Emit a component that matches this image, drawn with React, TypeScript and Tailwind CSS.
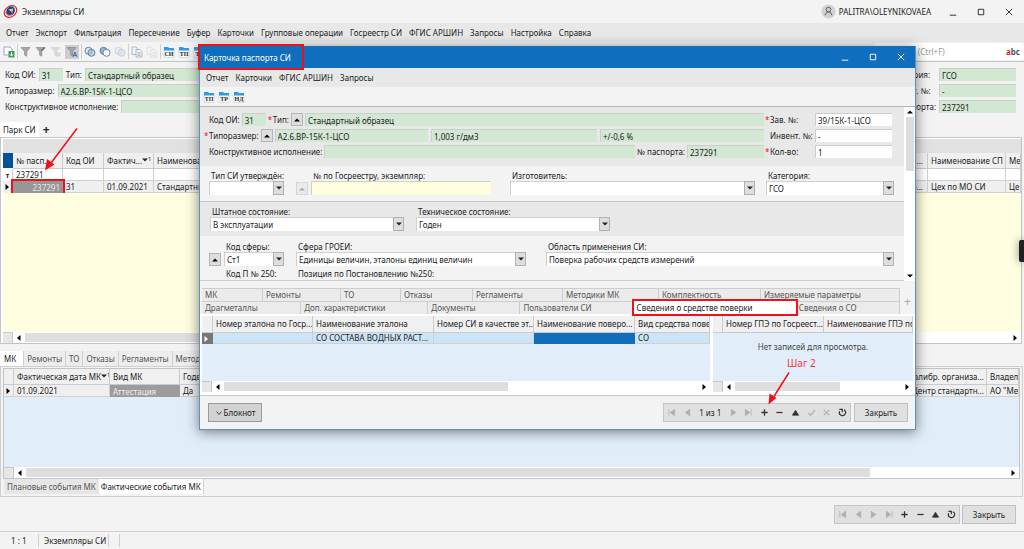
import React, { useState } from 'react';

const mainMenu = [
  'Отчет', 'Экспорт', 'Фильтрация', 'Пересечение', 'Буфер', 'Карточки',
  'Групповые операции', 'Госреестр СИ', 'ФГИС АРШИН', 'Запросы', 'Настройка', 'Справка',
];
const cardMenu = ['Отчет', 'Карточки', 'ФГИС АРШИН', 'Запросы'];
const eventTabs = ['МК', 'Ремонты', 'ТО', 'Отказы', 'Регламенты', 'Методики МК'];

const cardTabsTop = [
  { name: 'МК', size: 54 },
  { name: 'Ремонты', size: 71 },
  { name: 'ТО', size: 53 },
  { name: 'Отказы', size: 65 },
  { name: 'Регламенты', size: 83 },
  { name: 'Методики МК', size: 89 },
  { name: 'Комплектность', size: 95 },
  { name: 'Измеряемые параметры', size: 132 },
];
const cardTabsBottom = [
  { name: 'Драгметаллы', size: 92 },
  { name: 'Доп. характеристики', size: 120 },
  { name: 'Документы', size: 85 },
  { name: 'Пользователи СИ', size: 106 },
  { name: 'Сведения о средстве поверки', size: 156 },
  { name: 'Сведения о СО', size: 97 },
];

/* ---------- icons ---------- */

const glyphs: Record<string, React.ReactNode> = {
  first: <path d="M2 1.5v7M8.5 1.5v7L3.5 5z" />,
  prev: <path d="M7.5 1.5v7L2.5 5z" />,
  next: <path d="M2.5 1.5v7l5-3.5z" />,
  last: <path d="M8 1.5v7M1.5 1.5v7l5-3.5z" />,
  add: <path d="M5 1.5v7M1.5 5h7" strokeWidth="1.4" />,
  remove: <path d="M1.5 5h7" strokeWidth="1.4" />,
  edit: <path d="M5 2.5L8.5 8h-7z" />,
  post: <path d="M1.5 5.5L4 8l5-6" fill="none" strokeWidth="1.4" />,
  cancel: <path d="M2 2l6 6M8 2L2 8" strokeWidth="1.2" />,
  refresh: <path d="M6.5 2a3.4 3.4 0 1 1-4.6 1.5M1.5 1.5h3.3v3.3" fill="none" strokeWidth="1.3" />,
};

const glyphNames: Record<string, string> = {
  first: 'Первая', prev: 'Предыдущая', next: 'Следующая', last: 'Последняя', add: 'Добавить',
  remove: 'Удалить', edit: 'Изменить', post: 'Сохранить', cancel: 'Отменить', refresh: 'Обновить',
};

function Glyph({ name }: { name: string }) {
  return (
    <svg viewBox="0 0 10 10" className="h-[9px] w-[9px]" fill="currentColor" stroke="currentColor" strokeWidth="0.8">
      {glyphs[name]}
    </svg>
  );
}

function Triangle({ dir }: { dir: 'up' | 'down' | 'left' | 'right' }) {
  const paths = {
    up: 'M1 5.5h6L4 2.5z',
    down: 'M1 2.5h6l-3 3z',
    left: 'M5.5 1v6L2 4z',
    right: 'M2.5 1v6L6 4z',
  };
  return (
    <svg viewBox="0 0 8 8" className="h-2 w-2 shrink-0" fill="currentColor">
      <path d={paths[dir]} />
    </svg>
  );
}

function FolderIcon({ label }: { label: string }) {
  return (
    <svg viewBox="0 0 12 12" className="h-3 w-3">
      <path d="M1 3h10v8.5H1z" fill="#f7f9fb" stroke="#b9c6d2" strokeWidth="0.5" />
      <path d="M1 1h4l1 1h5v2.5H1z" fill="#2f9be6" />
      <text x="6" y="10.3" fontSize="6" fontWeight="700" textAnchor="middle" fill="#222" fontFamily="Liberation Serif, serif">
        {label}
      </text>
    </svg>
  );
}

function FilterIcon({ kind }: { kind: 'plain' | 'edit' | 'clear' | 'auto' }) {
  return (
    <svg viewBox="0 0 12 12" className={`h-3 w-3 ${kind === 'clear' ? 'opacity-30' : ''}`}>
      <path d="M1 1.5h9L6.7 5.5v4.8L4.6 9V5.5z" fill="#a2a7ab" stroke="#7d8286" strokeWidth="0.6" />
      {kind === 'edit' && <path d="M6 5l4-3.5" stroke="#6d7175" strokeWidth="1.4" />}
      {kind === 'clear' && <path d="M6.5 6.5l4 4M10.5 6.5l-4 4" stroke="#888" strokeWidth="1.2" />}
      {kind === 'auto' && <path d="M7 11l2-5 2 5M7.7 9.4h2.6" fill="none" stroke="#2c66b0" strokeWidth="0.9" />}
    </svg>
  );
}

function SetIcon({ kind }: { kind: 'and' | 'or' | 'off' }) {
  return (
    <svg viewBox="0 0 12 12" className={`h-3 w-3 ${kind === 'off' ? 'opacity-30' : ''}`} strokeWidth="0.9">
      <circle cx="4.5" cy="4.8" r="3.5" fill={kind === 'or' ? '#8fb6dc' : '#dbe7f3'} stroke="#5a7794" />
      <circle cx="7.5" cy="6.8" r="3.5" fill={kind === 'or' ? '#fff' : '#9cc0e2'} fillOpacity={kind === 'or' ? 1 : 0.6} stroke="#5a7794" />
    </svg>
  );
}

function CopyIcon({ faded }: { faded?: boolean }) {
  return (
    <svg viewBox="0 0 12 12" className={`h-3 w-3 ${faded ? 'opacity-30' : ''}`} fill="#eef3f8" stroke="#8fa3b5" strokeWidth="0.7">
      <path d="M1 1h4l1.5 1.5V8.5H1z" />
      <path d="M5 3.5h4l2 2V11H5z" />
      <path d="M6.5 6.5h3M6.5 8h3M6.5 9.5h3" />
    </svg>
  );
}

function ExportIcon() {
  return (
    <svg viewBox="0 0 12 12" className="h-3 w-3">
      <path d="M1 1h6l2 2v6H1z" fill="#fff" stroke="#7c97b0" strokeWidth="0.8" />
      <path d="M5.5 5h6v6.5h-6z" fill="#3a9a52" />
      <path d="M8.5 6.2v3.5M6.9 8.3l1.6 1.8 1.6-1.8" fill="none" stroke="#fff" strokeWidth="1" />
    </svg>
  );
}

function Logo() {
  return (
    <svg viewBox="0 0 16 16" className="h-[15px] w-[15px]" fill="none">
      <ellipse cx="8" cy="8" rx="7.3" ry="5.6" transform="rotate(-38 8 8)" stroke="#e3262b" strokeWidth="1.3" />
      <ellipse cx="8.5" cy="7.5" rx="5" ry="4.2" transform="rotate(-38 8 8)" fill="#17449b" />
      <path d="M5.5 5.8l5.5-1-1.3 5.2L8.8 8z" fill="#f7d52c" />
      <path d="M3 9c1 4 6 4 9 .5" stroke="#e3262b" strokeWidth="1" />
    </svg>
  );
}

/* ---------- small controls ---------- */

function WindowButtons() {
  return (
    <div className="flex gap-[18px]">
      {[
        ['Свернуть', 'M2 9h7'],
        ['Развернуть', 'M2.5 2.5h6v6h-6z'],
        ['Закрыть окно', 'M2 2l7 7M9 2l-7 7'],
      ].map(([title, d]) => (
        <button key={title} aria-label={title} className="w-[10px]">
          <svg viewBox="0 0 11 11" className="h-[10px] w-[10px]" fill="none" stroke="currentColor">
            <path d={d} />
          </svg>
        </button>
      ))}
    </div>
  );
}

function Field({ id, value, className }: { id: string; value: string; className: string }) {
  return (
    <input
      id={id}
      aria-label={id}
      readOnly
      defaultValue={value}
      className={`h-[13px] min-w-0 border-l border-t border-[#c9cfc9] px-[2px] outline-none ${className}`}
    />
  );
}

function UpButton({ label, disabled }: { label: string; disabled?: boolean }) {
  return (
    <button
      aria-label={label}
      disabled={disabled}
      className="flex h-[13px] w-3 shrink-0 items-center justify-center border border-[#b5b5b5] bg-[#dedede] text-black disabled:border-[#d6d6d6] disabled:bg-[#eaeaea] disabled:text-[#aaa]"
    >
      <Triangle dir="up" />
    </button>
  );
}

function Combo({ label, value, className }: { label: string; value: string; className: string }) {
  return (
    <label className={`flex flex-col ${className}`}>
      <span className="h-[10px] whitespace-nowrap pl-[2px] leading-[10px]">{label}</span>
      <span className="relative block">
        <select className="block h-[14px] w-full appearance-none border-l border-t border-[#cfcfcf] bg-white px-[2px] leading-[12px] outline-none">
          <option>{value}</option>
        </select>
        <span className="pointer-events-none absolute inset-y-0 right-0 flex w-[11px] items-center justify-center border border-[#b0b0b0] bg-[#dedede]">
          <Triangle dir="down" />
        </span>
      </span>
    </label>
  );
}

function ScrollBar({ thumb }: { thumb: number }) {
  return (
    <div className="flex h-[11px] bg-white">
      <div className="w-[10px] border-r border-t border-[#c8c8c8] bg-[#e6e6e6]" />
      <div className="flex flex-1 items-center gap-[2px] px-[2px] text-black">
        <Triangle dir="left" />
        <div className="h-[9px] flex-1">
          <div className="h-full bg-[#dedede]" style={{ width: `${thumb}%` }} />
        </div>
        <Triangle dir="right" />
      </div>
    </div>
  );
}

function Navigator({ items, className }: { items: string[]; className: string }) {
  return (
    <div className={`flex h-[19px] items-center border border-[#c6c6c6] bg-[#e0e0e0] ${className}`}>
      {items.map((item) =>
        glyphs[item] ? (
          <button
            key={item}
            aria-label={glyphNames[item]}
            className={`flex flex-1 justify-center ${
              ['add', 'remove', 'edit', 'refresh'].includes(item) ? 'text-[#333]' : 'text-[#aeaeae]'
            }`}
          >
            <Glyph name={item} />
          </button>
        ) : (
          <span key={item} className="whitespace-nowrap px-1">{item}</span>
        )
      )}
    </div>
  );
}

function CloseButton() {
  return <button className="h-[19px] w-[54px] border border-[#c0c0c0] bg-[#e0e0e0]">Закрыть</button>;
}

function SortMark() {
  return (
    <span className="inline-flex items-start">
      <svg viewBox="0 0 6 8" className="h-2 w-[6px]" fill="currentColor">
        <path d="M0 2.500h6l-3 3z" />
      </svg>
      <sup className="top-0 text-[6px] leading-[6px]">1</sup>
    </span>
  );
}

const th = 'overflow-hidden whitespace-nowrap border-b border-r border-[#cbcbcb] bg-[#f0f0f0] pl-[3px] text-left font-normal';
const td = 'overflow-hidden whitespace-nowrap border-b border-r border-[#d0d0d0] pl-[3px]';

/* ---------- main window ---------- */

function PassportTable() {
  return (
    <table className="w-full table-fixed border-separate border-spacing-0 leading-[11px]">
      <colgroup>
        <col className="w-[10px]" />
        <col className="w-[50px]" />
        <col className="w-[41px]" />
        <col className="w-[50px]" />
        <col />
        <col className="w-[78px]" />
        <col className="w-[15px]" />
      </colgroup>
      <thead>
        <tr className="h-4">
          <th className="border-b border-white bg-[#04519b]" aria-label="Выбор" />
          <th className={th}>№ пасп...</th>
          <th className={th}>Код ОИ</th>
          <th className={th}>Фактич...<SortMark /></th>
          <th className={th}><span className="flex justify-between pr-1"><span>Наименование</span><span>...</span></span></th>
          <th className={th}>Наименование СП</th>
          <th className={th}>Ме</th>
        </tr>
      </thead>
      <tbody>
        <tr className="h-3 bg-white">
          <td className="border-r border-[#d0d0d0] text-center text-[7px] font-bold">т</td>
          <td className={td}>237291</td>
          <td className={td} /><td className={td} /><td className={td} /><td className={td} /><td className={td} />
        </tr>
        <tr className="h-3 bg-[#efefef]">
          <td className="border-r border-[#d0d0d0] text-black"><Triangle dir="right" /></td>
          <td className="bg-[#979797] px-[3px] text-right text-[#e8e8e8] outline-2 outline-[#f0101c]">237291</td>
          <td className={td}>31</td>
          <td className={td}>01.09.2021</td>
          <td className={td}><span className="flex justify-between pr-1"><span>Стандартный образец</span><span>о...</span></span></td>
          <td className={td}>Цех по МО СИ</td>
          <td className={td}>Це</td>
        </tr>
      </tbody>
    </table>
  );
}

function EventTable() {
  return (
    <table className="w-full table-fixed border-separate border-spacing-0 leading-[11px]">
      <colgroup>
        <col className="w-[10px]" />
        <col className="w-[96px]" />
        <col className="w-[70px]" />
        <col className="w-[120px]" />
        <col />
        <col className="w-[32px]" />
      </colgroup>
      <thead>
        <tr className="h-4">
          <th className={th} aria-label="Выбор" />
          <th className={th}>Фактическая дата МК<SortMark /></th>
          <th className={th}>Вид МК</th>
          <th className={th}>Годен</th>
          <th className={th}><span className="block pr-[2px] text-right">калибр. организа...</span></th>
          <th className={th}>Владел</th>
        </tr>
      </thead>
      <tbody>
        <tr className="h-3 bg-[#efefef]">
          <td className="border-b border-r border-[#d0d0d0] text-black"><Triangle dir="right" /></td>
          <td className={td}>01.09.2021</td>
          <td className="bg-[#9c9c9c] px-[3px] text-[#f0f0f0]">Аттестация</td>
          <td className={td}>Да</td>
          <td className={td}><span className="block pr-[2px] text-right">"Центр стандартн...</span></td>
          <td className={td}>АО "Ме</td>
        </tr>
      </tbody>
    </table>
  );
}

function MainToolbar() {
  const sep = <span className="-mx-px h-[15px] w-px bg-[#d0d0d0]" />;
  return (
    <div className="flex h-5 items-center border-b border-[#c4c4c4]">
      <div className="flex flex-1 items-center gap-[3px] pl-[3px]">
        <button aria-label="Выгрузить"><ExportIcon /></button>
        {sep}
        <button aria-label="Фильтр"><FilterIcon kind="plain" /></button>
        <button aria-label="Изменить фильтр"><FilterIcon kind="edit" /></button>
        <button aria-label="Снять фильтр"><FilterIcon kind="clear" /></button>
        <button aria-label="Автофильтр" className="bg-[#cdcdcd] p-px"><FilterIcon kind="auto" /></button>
        {sep}
        <button aria-label="Пересечение"><SetIcon kind="and" /></button>
        <button aria-label="Разность"><SetIcon kind="or" /></button>
        <button aria-label="Сброс"><SetIcon kind="off" /></button>
        {sep}
        <button aria-label="Копировать"><CopyIcon /></button>
        <button aria-label="Вставить"><CopyIcon faded /></button>
        {sep}
        <button aria-label="СИ"><FolderIcon label="СИ" /></button>
        <button aria-label="ТП"><FolderIcon label="ТП" /></button>
        <button aria-label="ТР"><FolderIcon label="ТР" /></button>
      </div>
      <div className="flex h-[17px] w-[150px] items-center rounded-sm bg-white pr-1">
        <input
          type="search"
          aria-label="Поиск"
          placeholder="Поиск (Ctrl+F)"
          className="w-0 flex-1 pl-[18px] outline-none placeholder:text-[#999]"
        />
        <span className="font-bold text-[#555]"><span className="text-[#d22]">a</span>bc</span>
      </div>
    </div>
  );
}

function MainInfo() {
  const green = 'bg-[#d2e8d2]';
  return (
    <div className="flex gap-2 py-[6px] pl-[5px] pr-2">
      <div className="flex flex-1 flex-col gap-[3px]">
        <div className="flex items-center gap-[3px]">
          <label htmlFor="Код ОИ">Код ОИ:</label>
          <Field id="Код ОИ" value="31" className={`w-6 ${green}`} />
          <label htmlFor="Тип">Тип:</label>
          <Field id="Тип" value="Стандартный образец" className={`flex-1 ${green}`} />
        </div>
        <div className="flex items-center gap-[3px]">
          <label htmlFor="Типоразмер">Типоразмер:</label>
          <Field id="Типоразмер" value="А2.6.ВР-15К-1-ЦСО" className={`flex-1 ${green}`} />
        </div>
        <div className="flex items-center gap-[3px]">
          <label htmlFor="Исполнение">Конструктивное исполнение:</label>
          <Field id="Исполнение" value="" className={`flex-1 ${green}`} />
        </div>
      </div>
      <div className="grid w-[128px] grid-cols-[48px_1fr] items-center gap-[3px]">
        <label htmlFor="Категория" className="whitespace-nowrap">Категория:</label>
        <Field id="Категория" value="ГСО" className={green} />
        <label htmlFor="Инвент. №" className="whitespace-nowrap">Инвент. №:</label>
        <Field id="Инвент. №" value="-" className={green} />
        <label htmlFor="№ паспорта" className="whitespace-nowrap">№ паспорта:</label>
        <Field id="№ паспорта" value="237291" className={green} />
      </div>
    </div>
  );
}

/* ---------- passport card ---------- */

function Required() {
  return <span className="w-[5px] text-[#e11]">*</span>;
}

function CardForm() {
  const green = 'bg-[#d2e8d2]';
  return (
    <div className="flex border-t border-[#b5b5b5]">
      <div className="min-w-0 flex-1">
        <div className="flex h-[59px] bg-[#e8e8e8] pl-1 pr-3 pt-[6px]">
          <div className="flex flex-1 flex-col gap-[3px]">
            <div className="flex items-center gap-[2px] pl-[5px]">
              <label htmlFor="card-code">Код ОИ:</label>
              <Field id="card-code" value="31" className={`w-6 ${green}`} />
              <span className="flex"><Required /><label htmlFor="card-type">Тип:</label></span>
              <UpButton label="Выбрать тип" />
              <Field id="card-type" value="Стандартный образец" className={`flex-1 ${green}`} />
            </div>
            <div className="flex items-center gap-[2px]">
              <span className="flex"><Required /><label htmlFor="card-size">Типоразмер:</label></span>
              <UpButton label="Выбрать типоразмер" />
              <Field id="card-size" value="А2.6.ВР-15К-1-ЦСО" className={`flex-1 ${green}`} />
              <Field id="Плотность" value="1,003 г/дм3" className={`ml-px w-[166px] ${green}`} />
              <Field id="Погрешность" value="+/-0,6 %" className={`ml-px w-[164px] ${green}`} />
            </div>
            <div className="flex items-center gap-[2px] pl-[5px]">
              <label htmlFor="card-make">Конструктивное исполнение:</label>
              <Field id="card-make" value="" className={`flex-1 ${green}`} />
              <label htmlFor="card-passport">№ паспорта:</label>
              <Field id="card-passport" value="237291" className={`w-[77px] ${green}`} />
            </div>
          </div>
          <div className="grid w-[128px] grid-cols-[50px_1fr] content-start items-center gap-y-[3px] pl-px">
            <span className="flex whitespace-nowrap"><Required /><label htmlFor="card-serial">Зав. №:</label></span>
            <Field id="card-serial" value="39/15К-1-ЦСО" className="bg-white" />
            <label htmlFor="card-inv" className="whitespace-nowrap pl-[5px]">Инвент. №:</label>
            <Field id="card-inv" value="-" className="bg-white" />
            <span className="flex"><Required /><label htmlFor="card-count">Кол-во:</label></span>
            <Field id="card-count" value="1" className="bg-white" />
          </div>
        </div>

        <div className="flex h-9 items-end border-b border-[#c6c6c6] pb-[6px] pl-[9px] pr-[10px]">
          <Combo label="Тип СИ утверждён:" value="" className="w-[75px]" />
          <div className="flex w-[226px] items-end gap-[3px] pl-3">
            <UpButton label="Выбрать в Госреестре" disabled />
            <label className="flex flex-1 flex-col">
              <span className="h-[10px] whitespace-nowrap pl-[2px] leading-[10px]">№ по Госреестру, экземпляр:</span>
              <input readOnly className="h-[14px] w-[180px] border-l border-t border-[#cfcfcf] bg-[#fffedf] outline-none" />
            </label>
          </div>
          <Combo label="Изготовитель:" value="" className="flex-1" />
          <Combo label="Категория:" value="ГСО" className="ml-[11px] w-[128px]" />
        </div>

        <div className="flex h-[34px] items-end gap-3 bg-[#e8e8e8] pb-[5px] pl-[10px]">
          <Combo label="Штатное состояние:" value="В эксплуатации" className="w-[194px]" />
          <Combo label="Техническое состояние:" value="Годен" className="w-[194px]" />
        </div>

        <div className="flex h-[30px] items-end pl-[9px] pr-[10px]">
          <div className="flex w-[87px] items-end gap-[3px]">
            <UpButton label="Выбрать сферу" />
            <Combo label="Код сферы:" value="Ст1" className="w-[60px]" />
          </div>
          <Combo label="Сфера ГРОЕИ:" value="Единицы величин, эталоны единиц величин" className="w-[230px]" />
          <Combo label="Область применения СИ:" value="Поверка рабочих средств измерений" className="ml-5 flex-1" />
        </div>
        <div className="flex h-[15px] items-end border-b border-[#cfcfcf] pl-[26px]">
          <span className="w-[72px]">Код П № 250:</span>
          <span>Позиция по Постановлению №250:</span>
        </div>
      </div>
      <div className="flex w-[11px] flex-col items-center justify-between bg-white py-px text-black">
        <Triangle dir="up" />
        <div className="mb-auto mt-px h-[54px] w-2 bg-[#dcdcdc]" />
        <Triangle dir="down" />
      </div>
    </div>
  );
}

function CardTabs({ active, onSelect }: { active: string; onSelect: (name: string) => void }) {
  return (
    <div className="flex items-center pl-[2px]">
      <div className="min-w-0 flex-1">
        {[cardTabsTop, cardTabsBottom].map((row, index) => (
          <div key={index} className="flex h-[13px]">
            {row.map((tab) => (
              <button
                key={tab.name}
                onClick={() => onSelect(tab.name)}
                style={{ flexGrow: tab.size }}
                className={`w-0 whitespace-nowrap px-[3px] text-left leading-[12px] ${
                  active === tab.name
                    ? 'z-10 bg-white outline-2 outline-[#f0101c]'
                    : 'border-r border-t border-[#cdcdcd] bg-[#ebebeb] text-[#555]'
                }`}
              >
                {tab.name}
              </button>
            ))}
          </div>
        ))}
      </div>
      <button className="w-[15px] text-[12px] text-[#aaa]" aria-label="Добавить вкладку">+</button>
    </div>
  );
}

function CardGrids() {
  return (
    <div className="flex gap-[3px] border-b border-[#c8c8c8] bg-white px-[2px] pb-[3px] pt-[2px]">
      <div className="flex h-[76px] min-w-0 flex-1 flex-col bg-[#e2edfa]">
        <table className="w-full table-fixed border-separate border-spacing-0 leading-[10px]">
          <colgroup>
            <col className="w-[11px]" />
            <col className="w-[100px]" />
            <col className="w-[121px]" />
            <col className="w-[100px]" />
            <col className="w-[101px]" />
            <col />
          </colgroup>
          <thead>
            <tr className="h-[17px]">
              <th className={th} aria-label="Выбор" />
              <th className={th}>Номер эталона по Госр...</th>
              <th className={th}>Наименование эталона</th>
              <th className={th}>Номер СИ в качестве эт...</th>
              <th className={th}>Наименование поверо...</th>
              <th className={th}>Вид средства повер</th>
            </tr>
          </thead>
          <tbody>
            <tr className="h-[11px] bg-[#cce4f7]">
              <td className="bg-[#777] text-white"><Triangle dir="right" /></td>
              <td className={td} />
              <td className={td}>СО СОСТАВА ВОДНЫХ РАСТ...</td>
              <td className={td} />
              <td className="bg-[#106ebe]" />
              <td className={td}>СО</td>
            </tr>
          </tbody>
        </table>
        <div className="mt-auto"><ScrollBar thumb={60} /></div>
      </div>
      <div className="flex h-[76px] w-[200px] flex-col bg-[#e2edfa]">
        <table className="w-full table-fixed border-separate border-spacing-0 leading-[10px]">
          <colgroup>
            <col className="w-[10px]" />
            <col className="w-[101px]" />
            <col />
          </colgroup>
          <thead>
            <tr className="h-[17px]">
              <th className={th} aria-label="Выбор" />
              <th className={th}>Номер ГПЭ по Госреест...</th>
              <th className={th}>Наименование ГПЭ по</th>
            </tr>
          </thead>
        </table>
        <p className="mt-[7px] text-center text-[#444]">Нет записей для просмотра.</p>
        <p className="pl-[74px] text-[10px] leading-5 text-[#f5333f]">Шаг 2</p>
        <div className="mt-auto"><ScrollBar thumb={63} /></div>
      </div>
    </div>
  );
}

function PassportCard() {
  const [tab, setTab] = useState('Сведения о средстве поверки');

  return (
    <section
      aria-label="Карточка паспорта СИ"
      className="absolute left-[199px] right-[108px] top-[46px] border-x border-b border-[#5b93c5] bg-[#f3f3f3] shadow-[0_2px_12px_rgba(0,0,0,0.5)]"
    >
      <header className="flex h-[22px] items-center justify-between bg-[#106ebe] pr-[9px] text-white">
        <h2 className="flex h-full w-[102px] items-center pl-1 outline-2 outline-[#f0101c]">Карточка паспорта СИ</h2>
        <WindowButtons />
      </header>
      <nav className="flex h-[19px] items-center gap-[7px] bg-[#e8e8e8] pl-[6px]">
        {cardMenu.map((item) => <button key={item}>{item}</button>)}
      </nav>
      <div className="flex h-[19px] items-center gap-[3px] pl-[3px]">
        {['ТП', 'ТР', 'НД'].map((item) => (
          <button key={item} aria-label={item}><FolderIcon label={item} /></button>
        ))}
      </div>
      <CardForm />
      <div className="mt-[7px]"><CardTabs active={tab} onSelect={setTab} /></div>
      <CardGrids />
      <footer className="flex h-[33px] items-center gap-[3px] pl-2 pr-[7px]">
        <button className="mr-auto flex h-[19px] w-[54px] items-center justify-center gap-px border border-[#999] bg-[#d2d2d2]">
          <svg viewBox="0 0 8 8" className="h-2 w-2" fill="none" stroke="#444"><path d="M1.5 2.5L4 5.5l2.5-3" /></svg>
          Блокнот
        </button>
        <Navigator
          items={['first', 'prev', '1 из 1', 'next', 'last', 'add', 'remove', 'edit', 'post', 'cancel', 'refresh']}
          className="w-[188px]"
        />
        <CloseButton />
      </footer>
    </section>
  );
}

export default function App() {
  const [eventTab, setEventTab] = useState('МК');

  return (
    <div className="relative flex min-h-screen flex-col overflow-hidden bg-[#f3f3f3] font-['Noto_Sans',sans-serif] text-[8px] leading-[13px] text-[#222]">
      <header className="flex h-[23px] items-center pl-[3px] pr-[10px]">
        <Logo />
        <h1 className="ml-1 flex-1">Экземпляры СИ</h1>
        <svg viewBox="0 0 16 16" className="h-[15px] w-[15px]" fill="none" stroke="#555">
          <circle cx="8" cy="8" r="7.5" fill="#d2d2d2" stroke="none" />
          <circle cx="8" cy="6" r="2.5" />
          <path d="M4.5 12c0-4.5 7-4.5 7 0" />
        </svg>
        <span className="ml-[3px] mr-[17px]">PALITRA\OLEYNIKOVAEA</span>
        <WindowButtons />
      </header>
      <nav className="flex h-[19px] items-center gap-[7px] bg-[#e8e8e8] pl-[6px]">
        {mainMenu.map((item) => <button key={item}>{item}</button>)}
      </nav>
      <MainToolbar />
      <MainInfo />

      <div className="mt-[3px] flex h-[15px] items-center">
        <button className="h-full bg-white px-[3px]">Парк СИ</button>
        <button className="px-1 text-[12px] font-bold" aria-label="Новая вкладка">+</button>
      </div>
      <div className="mr-[2px] flex flex-1 flex-col border border-[#c4c4c4] bg-white pl-[2px] pt-px">
        <div className="h-[14px] bg-[#e1e1e1]" />
        <PassportTable />
        <div className="min-h-[60px] flex-1 bg-[#fffee0]" />
        <ScrollBar thumb={80} />
      </div>

      <div className="mt-[7px] flex h-[15px] items-stretch">
        {eventTabs.map((name) => (
          <button
            key={name}
            onClick={() => setEventTab(name)}
            className={`whitespace-nowrap border-r border-[#d0d0d0] ${
              name === eventTab ? 'bg-white pl-1 pr-[7px]' : 'bg-[#ededed] px-[3px] text-[#555]'
            }`}
          >
            {name}
          </button>
        ))}
      </div>
      <div className="mr-px border border-[#cfcfcf] px-[2px] pb-[2px] pt-px">
        <div className="flex h-[111px] flex-col border border-[#c4c4c4] bg-[#e2edfa]">
          <EventTable />
          <div className="mt-auto"><ScrollBar thumb={86} /></div>
        </div>
        <div className="flex h-[15px] pl-px">
          <button className="bg-[#e6e6e6] px-[3px] text-[#555]">Плановые события МК</button>
          <button className="border-r border-[#d0d0d0] bg-white px-[2px]">Фактические события МК</button>
        </div>
      </div>

      <footer className="flex h-[35px] items-center justify-end gap-[2px] border-b border-[#cfcfcf] pr-2">
        <Navigator
          items={['first', 'prev', 'next', 'last', 'add', 'remove', 'edit', 'refresh']}
          className="w-[126px]"
        />
        <CloseButton />
      </footer>
      <div className="flex h-[17px] items-center whitespace-nowrap">
        <span className="w-[39px] border-r border-[#cfcfcf] pl-[11px]">1 : 1</span>
        <span className="w-[70px] border-r border-[#cfcfcf] pl-[5px]">Экземпляры СИ</span>
        <span className="h-[13px] w-[11px] border-r border-[#cfcfcf]" />
      </div>

      <PassportCard />

      {/* pointers to the steps */}
      <svg viewBox="0 0 34 44" className="absolute left-[44px] top-[127px] h-[44px] w-[34px]" fill="#f0101c">
        <path d="M33 1.5L7 36" stroke="#f0101c" strokeWidth="1.5" />
        <path d="M1 43.5L3 32l7.5 5.5z" />
      </svg>
      <svg viewBox="0 0 24 34" className="absolute left-[767px] top-[371px] h-[34px] w-[24px]" fill="#f0101c">
        <path d="M22 1.5L6 27" stroke="#f0101c" strokeWidth="1.5" />
        <path d="M1.5 33.5L2.5 22.5l7 4.5z" />
      </svg>
      <div className="absolute right-0 top-[240px] h-[22px] w-[5px] rounded-l-[2px] bg-[#222] shadow-[0_0_8px_rgba(0,0,0,0.5)]" />
    </div>
  );
}
